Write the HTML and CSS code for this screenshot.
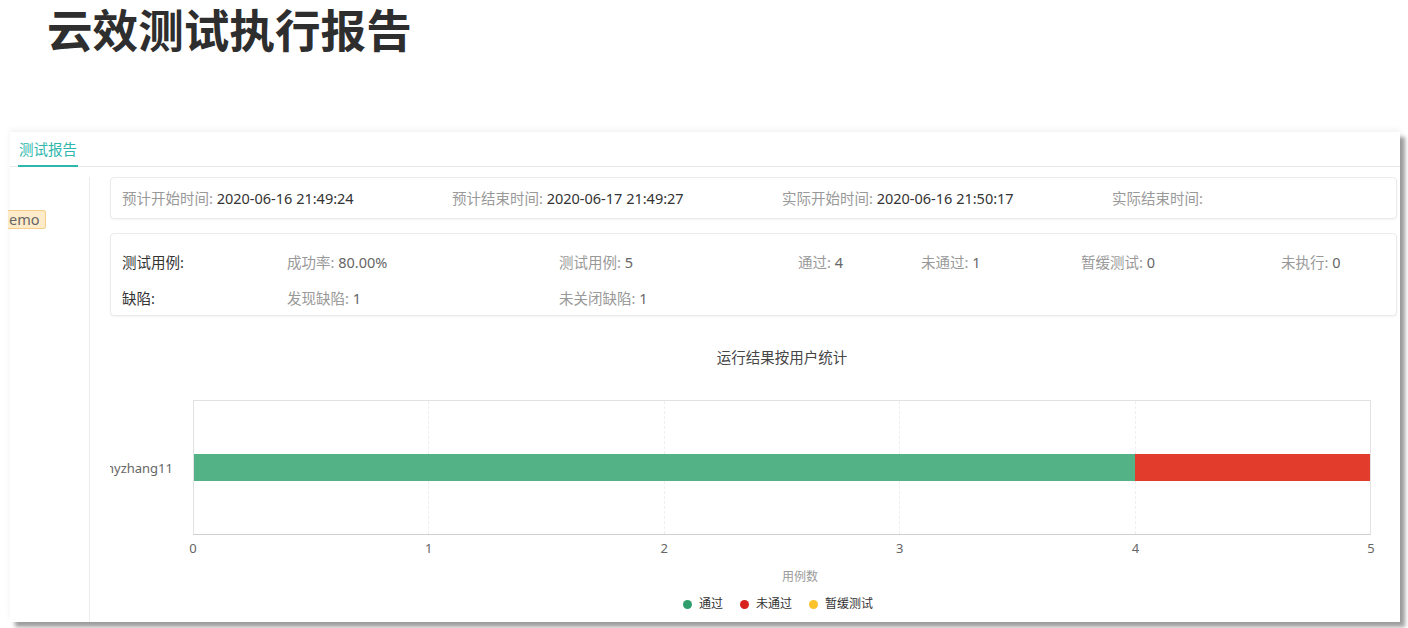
FILE: index.html
```html
<!DOCTYPE html>
<html lang="zh-CN">
<head>
<meta charset="utf-8">
<title>云效测试执行报告</title>
<link rel="stylesheet" href="styles.css">
</head>
<body>
<div class="slide">
  <header class="slide-head">
    <h1 class="slide-title">云效测试执行报告</h1>
  </header>
  <section class="panel">
    <nav class="tabs"><span class="tab active">测试报告</span></nav>
    <div class="panel-body">
      <aside class="side"><span class="badge">emo</span></aside>
      <main class="content">
        <div class="card card-time">
          <div class="item"><span class="lbl">预计开始时间:</span> <span class="val">2020-06-16 21:49:24</span></div>
          <div class="item"><span class="lbl">预计结束时间:</span> <span class="val">2020-06-17 21:49:27</span></div>
          <div class="item"><span class="lbl">实际开始时间:</span> <span class="val">2020-06-16 21:50:17</span></div>
          <div class="item"><span class="lbl">实际结束时间:</span> <span class="val"></span></div>
        </div>
        <div class="card card-stats">
          <div class="head">测试用例:</div>
          <div class="item"><span class="lbl">成功率:</span> <span class="num">80.00%</span></div>
          <div class="item"><span class="lbl">测试用例:</span> <span class="num">5</span></div>
          <div class="item"><span class="lbl">通过:</span> <span class="num">4</span></div>
          <div class="item"><span class="lbl">未通过:</span> <span class="num">1</span></div>
          <div class="item"><span class="lbl">暂缓测试:</span> <span class="num">0</span></div>
          <div class="item"><span class="lbl">未执行:</span> <span class="num">0</span></div>
          <div class="head">缺陷:</div>
          <div class="item"><span class="lbl">发现缺陷:</span> <span class="num">1</span></div>
          <div class="item"><span class="lbl">未关闭缺陷:</span> <span class="num">1</span></div>
        </div>
        <div class="chart">
          <div class="chart-title">运行结果按用户统计</div>
          <div class="chart-main">
            <div class="y-label"><span class="y-text">nyzhang11</span><span class="y-tick"></span></div>
            <div class="plot">
              <div class="grid-lines"><i></i><i></i><i></i><i></i><i></i></div>
              <div class="bar-row">
                <div class="bar pass" style="width:80%"></div>
                <div class="bar fail" style="width:20%"></div>
              </div>
            </div>
          </div>
          <div class="x-ticks">
            <span class="tick">0</span><span class="tick">1</span><span class="tick">2</span><span class="tick">3</span><span class="tick">4</span><span class="tick">5</span>
          </div>
          <div class="x-name">用例数</div>
          <div class="legend">
            <span class="lg"><i class="dot pass"></i>通过</span>
            <span class="lg"><i class="dot fail"></i>未通过</span>
            <span class="lg"><i class="dot hold"></i>暂缓测试</span>
          </div>
        </div>
      </main>
    </div>
  </section>
</div>
</body>
</html>
```

FILE: styles.css
```css
* { box-sizing: border-box; }
html, body { margin: 0; padding: 0; background: #fff; }
body {
  font-family: "Noto Sans", "Noto Sans CJK SC", sans-serif;
  color: #333;
  width: 1408px;
  height: 628px;
  overflow: hidden;
}
.slide { width: 1408px; height: 628px; }

.slide-head {
  height: 132px;
  padding: 0 0 0 47px;
}
.slide-title {
  margin: 0;
  font-family: "Noto Sans CJK SC", sans-serif;
  font-size: 45.6px;
  line-height: 56px;
  font-weight: 700;
  color: #2e2e2e;
}

.panel {
  margin-left: 10px;
  width: 1390px;
  height: 490px;
  background: #fff;
  box-shadow: 5px 5px 4px rgba(0, 0, 0, 0.38), 0 -2px 6px rgba(0, 0, 0, 0.06);
  display: flex;
  flex-direction: column;
}

.tabs {
  height: 35px;
  border-bottom: 1px solid #e8e8e8;
  display: flex;
  align-items: flex-end;
  padding-left: 8px;
}
.tab {
  font-size: 14.5px;
  line-height: 31px;
  padding: 0 1px;
  color: #2db7ad;
  border-bottom: 2px solid #2db7ad;
  margin-bottom: -1px;
}

.panel-body {
  flex: 1;
  display: flex;
  min-height: 0;
}
.side {
  width: 80px;
  margin-top: 10px;
  border-right: 1px solid #ececec;
  padding-top: 31px;
}
.badge {
  display: inline-block;
  height: 19px;
  line-height: 17px;
  padding: 0 5px 0 1px;
  margin-left: -2px;
  font-size: 14.5px;
  color: #666;
  background: #fdebc9;
  border: 1px solid #f3cf8b;
  border-left: none;
  border-radius: 0 3px 3px 0;
}

.content {
  flex: 1;
  padding: 10px 3px 0 20px;
  overflow: hidden;
  font-size: 14.5px;
}

.card {
  border: 1px solid #ebebeb;
  border-radius: 4px;
  box-shadow: 0 1px 2px rgba(0, 0, 0, 0.05);
  background: #fff;
}
.card-time {
  height: 42px;
  padding: 0 11px;
  display: grid;
  grid-template-columns: 330px 330px 330px 1fr;
  align-items: center;
  line-height: 40px;
}
.lbl { color: #999; }
.val { color: #333; }
.num { color: #666; }

.card-stats {
  margin-top: 14px;
  height: 83px;
  padding: 18px 11px 0;
  display: grid;
  grid-template-columns: 165px 272px 239px 123px 160px 200px 1fr;
  grid-auto-rows: 20px;
  row-gap: 16px;
  line-height: 20px;
}
.card-stats .head { color: #333; }

.chart {
  margin-top: 31px;
  overflow: hidden;
}
.chart-title,
.x-ticks,
.x-name,
.legend {
  margin-left: 83px;
  width: 1178px;
}
.chart-title {
  text-align: center;
  font-size: 14.5px;
  line-height: 20px;
  color: #464646;
}
.chart-main {
  margin-top: 33px;
  display: grid;
  grid-template-columns: 83px 1178px;
  height: 135px;
}
.y-label {
  display: flex;
  align-items: center;
  justify-content: flex-end;
  white-space: nowrap;
  font-size: 13px;
  color: #666;
}
.y-text { margin-right: 20px; }
.y-tick {
  width: 6px;
  height: 1px;
  background: #cfcfcf;
}
.plot {
  display: grid;
  border: 1px solid #e2e2e2;
  border-bottom-color: #cfcfcf;
}
.grid-lines,
.bar-row {
  grid-area: 1 / 1;
}
.grid-lines {
  display: flex;
}
.grid-lines i {
  flex: 1;
  border-right: 1px dashed #efefef;
}
.grid-lines i:last-child { border-right: none; }
.bar-row {
  display: flex;
  align-self: start;
  margin-top: 53px;
  height: 27px;
}
.bar { height: 27px; }
.bar.pass { background: #53b387; }
.bar.fail { background: #e23d2c; }

.x-ticks {
  margin-top: 5px;
  display: flex;
  justify-content: space-between;
  font-size: 13px;
  line-height: 16px;
  color: #666;
}
.tick {
  width: 0;
  display: flex;
  justify-content: center;
}
.x-name {
  margin-top: 13px;
  text-align: center;
  padding-left: 36px;
  font-size: 12px;
  line-height: 16px;
  color: #9a9a9a;
}
.legend {
  margin-top: 11px;
  display: flex;
  justify-content: center;
  gap: 17px;
  padding-right: 8px;
  font-size: 12px;
  line-height: 16px;
  color: #333;
}
.lg {
  display: flex;
  align-items: center;
  gap: 7px;
}
.dot {
  width: 9px;
  height: 9px;
  border-radius: 50%;
  display: inline-block;
}
.dot.pass { background: #2f9e6f; }
.dot.fail { background: #d7231b; }
.dot.hold { background: #fbc22c; }
```
